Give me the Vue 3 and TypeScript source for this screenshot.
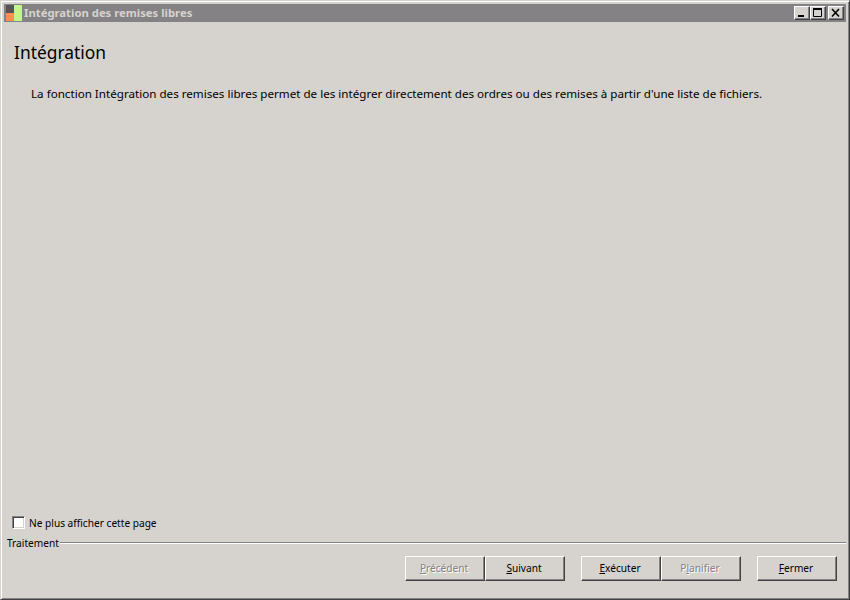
<script setup lang="ts">
</script>

<template>
  <div class="window">
    <div class="titlebar">
      <svg class="appicon" width="16" height="16" viewBox="0 0 16 16">
        <rect x="0" y="0" width="8" height="8" fill="#555" />
        <rect x="0" y="8" width="8" height="8" fill="#fb8f50" />
        <rect x="8" y="0" width="8" height="16" fill="#c4f58c" />
      </svg>
      <span class="title">Intégration des remises libres</span>
      <div class="controls">
        <button class="ctl">
          <svg width="12" height="10" viewBox="0 0 12 10"><rect x="2" y="7" width="6" height="2" fill="#000" /></svg>
        </button>
        <button class="ctl">
          <svg width="12" height="10" viewBox="0 0 12 10"><path d="M1.5 1.5h8v7h-8z" fill="none" stroke="#000" /><rect x="1" y="0" width="9" height="2" fill="#000" /></svg>
        </button>
        <button class="ctl closectl">
          <svg width="12" height="10" viewBox="0 0 12 10"><path d="M2 1l7 7.5M9 1l-7 7.5" stroke="#000" stroke-width="1.6" fill="none" /></svg>
        </button>
      </div>
    </div>
    <main class="content">
      <h1>Intégration</h1>
      <p>La fonction Intégration des remises libres permet de les intégrer directement des ordres ou des remises à partir d'une liste de fichiers.</p>
    </main>
    <label class="check"><span class="box"></span>Ne plus afficher cette page</label>
    <div class="legend"><span>Traitement</span><i class="rule"></i></div>
    <div class="actions">
      <div class="group">
        <button class="btn" disabled><u>P</u>récédent</button>
        <button class="btn"><u>S</u>uivant</button>
      </div>
      <div class="group">
        <button class="btn"><u>E</u>xécuter</button>
        <button class="btn" disabled>P<u>l</u>anifier</button>
      </div>
      <button class="btn"><u>F</u>ermer</button>
    </div>
  </div>
</template>

<style scoped>
.window {
  box-sizing: border-box;
  width: 850px;
  height: 600px;
  display: flex;
  flex-direction: column;
  background: #d6d3ce;
  padding: 3px 3px 2px 3px;
  border: 1px solid #d6d3ce;
  border-right-color: #424142;
  border-bottom-color: #424142;
  box-shadow: inset 1px 1px 0 #fff, inset -1px -1px 0 #848284;
  font-family: "Noto Sans", sans-serif;
  font-size: 10.15px;
  color: #000;
  overflow: hidden;
}
.titlebar {
  height: 18px;
  flex: none;
  display: flex;
  align-items: center;
  background: #848284;
  color: #d6d3ce;
  font-size: 11.3px;
  font-weight: bold;
}
.appicon { flex: none; margin-left: 2px; }
.title { margin: -2px 0 0 2px; }
.controls { margin-left: auto; display: flex; margin-right: 2px; }
.ctl {
  box-sizing: border-box;
  width: 16px;
  height: 14px;
  padding: 0;
  display: flex;
  align-items: center;
  justify-content: center;
  background: #d6d3ce;
  border: 1px solid;
  border-color: #fff #424142 #424142 #fff;
  box-shadow: inset -1px -1px 0 #848284;
}
.closectl { margin-left: 2px; }
.content { flex: 1; min-height: 0; padding: 0 10px; }
h1 {
  margin: 20px 0 0;
  font-size: 17.4px;
  line-height: 20px;
  font-weight: normal;
}
p {
  margin: 25px 0 0 17px;
  font-size: 11.63px;
  line-height: 14px;
  white-space: nowrap;
}
.check {
  display: flex;
  align-items: center;
  gap: 4px;
  padding-left: 8px;
  height: 14px;
  margin-bottom: 6px;
}
.box {
  box-sizing: border-box;
  width: 13px;
  height: 13px;
  margin-top: -2px;
  background: #fff;
  border: 1px solid;
  border-color: #848284 #fff #fff #848284;
  box-shadow: inset 1px 1px 0 #424142, inset -1px -1px 0 #d6d3ce;
}
.legend {
  display: flex;
  align-items: center;
  padding-left: 3px;
  height: 14px;
}
.rule {
  flex: 1;
  height: 1px;
  background: #848284;
  border-bottom: 1px solid #fff;
  margin-left: 1px;
}
.actions {
  display: flex;
  justify-content: flex-end;
  gap: 16px;
  padding: 6px 9px 0 0;
  height: 41px;
  box-sizing: content-box;
}
.group { display: flex; }
.btn {
  box-sizing: border-box;
  width: 80px;
  height: 25px;
  padding: 0 2px 1px 0;
  font: inherit;
  color: #000;
  background: #d6d3ce;
  border: 1px solid;
  border-color: #fff #424142 #424142 #fff;
  box-shadow: inset -1px -1px 0 #848284;
}
.btn:disabled { color: #848284; text-shadow: 1px 1px 0 #fff; }
</style>
